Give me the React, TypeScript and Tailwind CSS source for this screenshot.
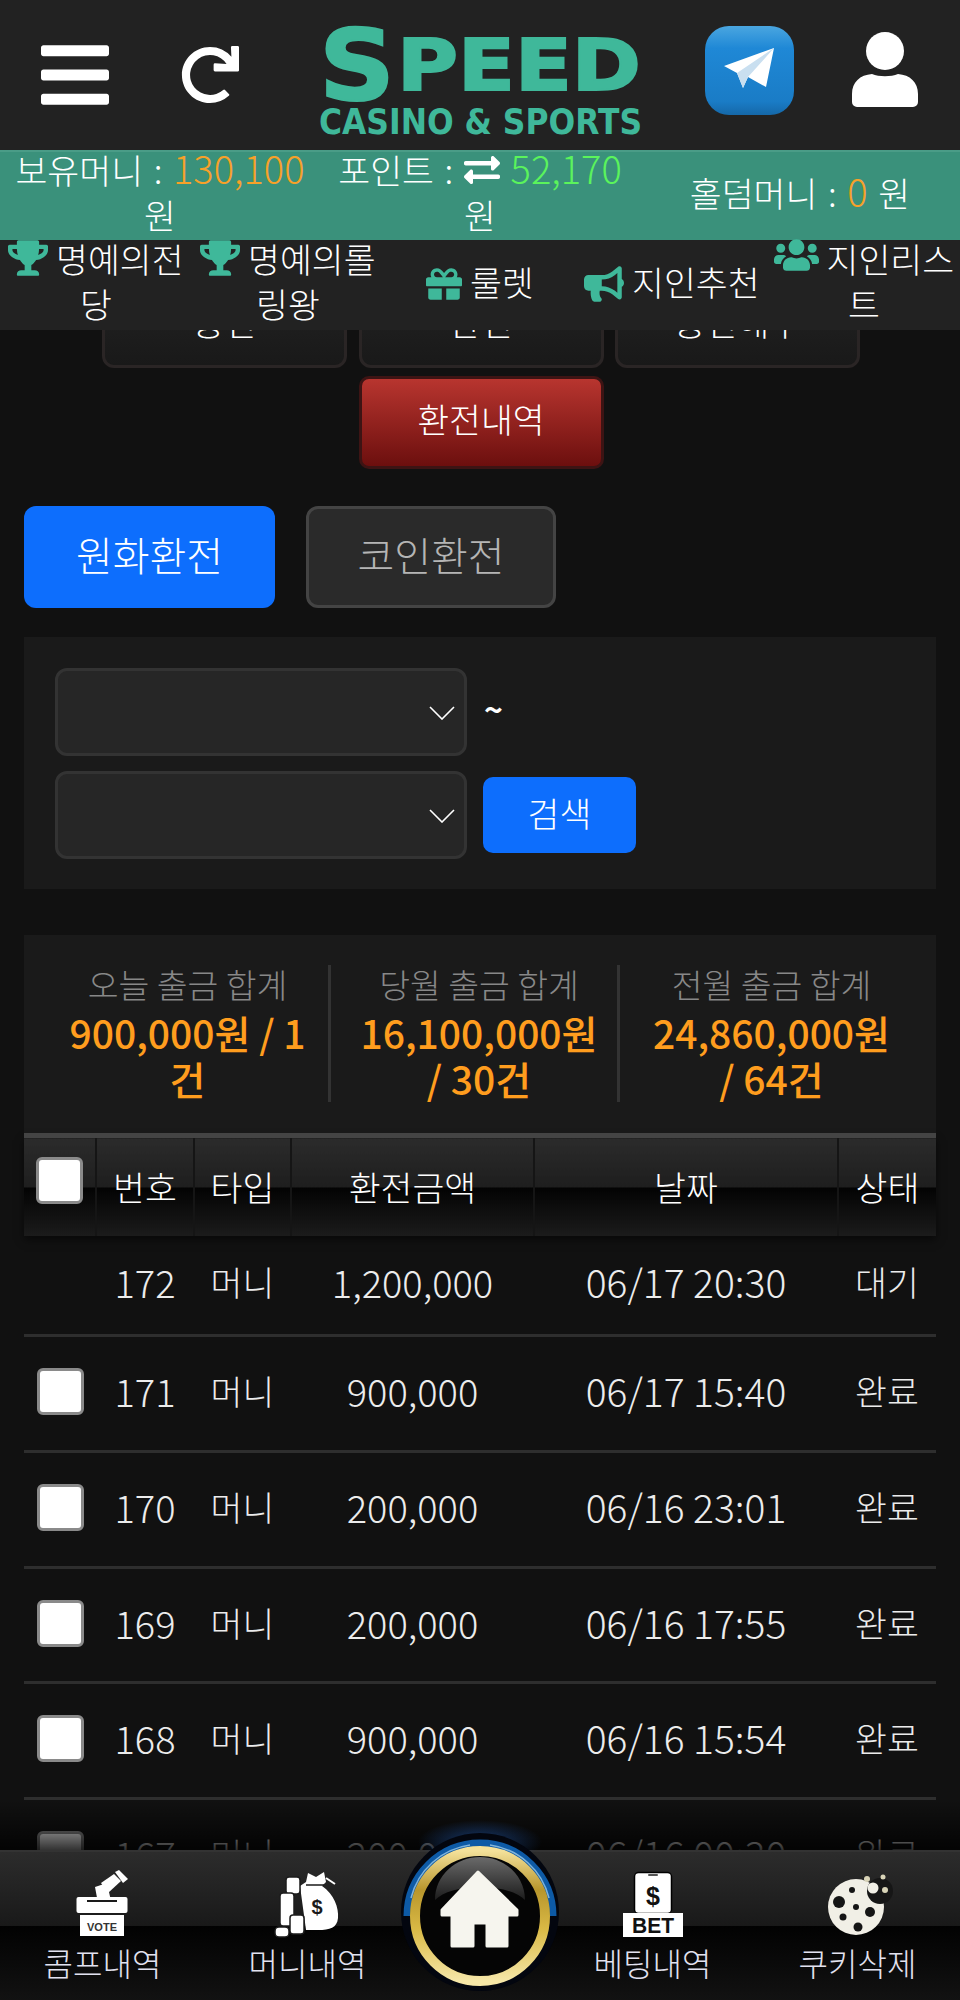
import { FaBars, FaBullhorn, FaExchangeAlt, FaGift, FaRedo, FaTrophy, FaUsers } from "react-icons/fa";

const rows = [
  { no: "172", amount: "1,200,000", date: "06/17 20:30", state: "대기", check: false, height: "h-[100px]" },
  { no: "171", amount: "900,000", date: "06/17 15:40", state: "완료", check: true, height: "h-[116px]" },
  { no: "170", amount: "200,000", date: "06/16 23:01", state: "완료", check: true, height: "h-[116px]" },
  { no: "169", amount: "200,000", date: "06/16 17:55", state: "완료", check: true, height: "h-[115px]" },
  { no: "168", amount: "900,000", date: "06/16 15:54", state: "완료", check: true, height: "h-[116px]" },
  { no: "167", amount: "200,000", date: "06/16 00:30", state: "완료", check: true, height: "h-[116px]" },
];

const totals = [
  { label: "오늘 출금 합계", value: "900,000원 / 1건" },
  { label: "당월 출금 합계", value: "16,100,000원 / 30건" },
  { label: "전월 출금 합계", value: "24,860,000원 / 64건" },
];

function Logo() {
  return (
    <svg width="324" height="110" viewBox="0 0 324 110" className="block overflow-visible">
      <g fill="#3fb89a" stroke="#3fb89a" fontWeight="700" fontFamily="'DejaVu Sans', sans-serif">
        <text x="0" y="73" fontSize="98" textLength="76" lengthAdjust="spacingAndGlyphs" strokeWidth="2">S</text>
        <text x="78" y="63" fontSize="72" textLength="244" lengthAdjust="spacingAndGlyphs" strokeWidth="2">PEED</text>
        <text x="0" y="107" fontSize="35" textLength="323" lengthAdjust="spacingAndGlyphs" strokeWidth="0">CASINO &amp; SPORTS</text>
      </g>
    </svg>
  );
}

function Telegram() {
  return (
    <div className="flex h-[89px] w-[89px] items-center justify-center rounded-[24px] bg-[linear-gradient(180deg,#4aa6e0_0%,#1f88d6_25%,#1a7cc6_85%,#1568a8_100%)]">
      <svg width="52" height="44" viewBox="0 0 52 44">
        <path d="M0 18 50 0 42 39 24 29 19 40 13 25Z" fill="#fff" />
        <path d="M13 25 50 0 24 29 19 40Z" fill="#c9dff0" />
      </svg>
    </div>
  );
}

function UserGlyph() {
  return (
    <svg width="66" height="75" viewBox="0 0 66 75" className="block">
      <circle cx="33" cy="19" r="19" fill="#fff" />
      <path d="M20 42c7 3 19 3 26 0 12 1 20 8 20 20v8a5 5 0 0 1-5 5H5a5 5 0 0 1-5-5v-8c0-12 8-19 20-20Z" fill="#fff" />
    </svg>
  );
}

function VoteIcon() {
  return (
    <svg width="60" height="70" viewBox="0 0 60 70">
      <path d="M22 17 34 13 38 31 25 33Z" fill="#fff" />
      <path d="M28 13 41 4 48 11 35 23Z" fill="#fff" />
      <path d="M42 2 46 0 55 9 50 13Z" fill="#fff" />
      <rect x="3.5" y="27" width="51" height="16" rx="2" fill="#fff" />
      <rect x="14" y="30" width="30" height="2" fill="#1a1a1a" />
      <rect x="7" y="45" width="44" height="21" fill="#fff" />
      <text x="29" y="61" textAnchor="middle" fontSize="11" fontWeight="700" fontFamily="'Liberation Sans', sans-serif" fill="#333">VOTE</text>
    </svg>
  );
}

function MoneyIcon() {
  return (
    <svg width="80" height="70" viewBox="0 0 80 70">
      <path d="M40 3 48 7 56 2 58 12 54 16C66 24 71 38 70 48 69 58 62 60 50 60H38L32 16 38 12Z" fill="#fff" />
      <path d="M38 15H56" stroke="#1a1a1a" strokeWidth="1.5" />
      <path d="M58 8 67 14" stroke="#fff" strokeWidth="2" />
      <text x="49" y="44" textAnchor="middle" fontSize="20" fontWeight="700" fontFamily="'Liberation Sans', sans-serif" fill="#1a1a1a">$</text>
      <rect x="18" y="7" width="14" height="17" rx="3" fill="#fff" stroke="#1c1c1c" strokeWidth="1.5" />
      <rect x="12" y="23" width="14" height="33" rx="3" fill="#fff" stroke="#1c1c1c" strokeWidth="1.5" />
      <rect x="22" y="45" width="14" height="19" rx="3" fill="#fff" stroke="#1c1c1c" strokeWidth="1.5" />
      <rect x="7" y="57" width="14" height="10" rx="4" fill="#fff" stroke="#1c1c1c" strokeWidth="1.5" />
    </svg>
  );
}

function BetIcon() {
  return (
    <svg width="70" height="70" viewBox="0 0 70 70">
      <rect x="16.5" y="2.5" width="37" height="41" rx="4" fill="#fff" stroke="#000" strokeWidth="1.5" />
      <rect x="30" y="4" width="10" height="2" rx="1" fill="#555" />
      <text x="35" y="35" textAnchor="middle" fontSize="25" fontWeight="700" fontFamily="'Liberation Sans', sans-serif" fill="#111">$</text>
      <rect x="5" y="43" width="60" height="24" fill="#fff" />
      <text x="35" y="63" textAnchor="middle" fontSize="22" fontWeight="700" textLength="42" lengthAdjust="spacingAndGlyphs" fontFamily="'Liberation Sans', sans-serif" fill="#111">BET</text>
    </svg>
  );
}

function CookieIcon() {
  return (
    <svg width="75" height="70" viewBox="0 0 75 70">
      <circle cx="36" cy="37" r="28" fill="#f1efe6" />
      <circle cx="60" cy="21" r="13" fill="#161616" />
      <circle cx="53" cy="18" r="5.5" fill="#f1efe6" />
      <circle cx="47" cy="9" r="3" fill="#d9d4b8" />
      <circle cx="63" cy="7" r="2.5" fill="#d9d4b8" />
      <circle cx="65" cy="20" r="3" fill="#d9d4b8" />
      <circle cx="19" cy="32" r="6" fill="#151515" />
      <circle cx="32" cy="20" r="3" fill="#151515" />
      <circle cx="36" cy="37" r="3" fill="#151515" />
      <circle cx="50" cy="42" r="5" fill="#151515" />
      <circle cx="23" cy="47" r="3.5" fill="#151515" />
      <circle cx="38" cy="57" r="4.5" fill="#151515" />
    </svg>
  );
}

function HomeButton() {
  return (
    <svg width="180" height="180" viewBox="0 0 180 180" className="block">
      <defs>
        <linearGradient id="goldRing" x1="0" y1="0" x2="0" y2="1">
          <stop offset="0" stopColor="#f4e19a" />
          <stop offset="0.3" stopColor="#b8962c" />
          <stop offset="0.6" stopColor="#d9b945" />
          <stop offset="1" stopColor="#f6e7a8" />
        </linearGradient>
        <linearGradient id="gloss" x1="0" y1="0" x2="0" y2="1">
          <stop offset="0" stopColor="#6a6a6a" />
          <stop offset="1" stopColor="#1c1c1c" />
        </linearGradient>
        <radialGradient id="halo" cx="0.5" cy="0.5" r="0.5">
          <stop offset="0" stopColor="#1d4f9c" stopOpacity="0.7" />
          <stop offset="1" stopColor="#1d4f9c" stopOpacity="0" />
        </radialGradient>
      </defs>
      <ellipse cx="90" cy="22" rx="62" ry="22" fill="url(#halo)" />
      <circle cx="90" cy="92" r="79" fill="#03060f" />
      <path d="M17 96A73 73 0 0 1 163 96" fill="none" stroke="#0d5aa6" strokeWidth="7" />
      <path d="M21 78A71 71 0 0 1 80 25M100 25A71 71 0 0 1 159 78" fill="none" stroke="#7fb4dc" strokeWidth="1.5" />
      <circle cx="90" cy="96" r="65" fill="#050505" stroke="url(#goldRing)" strokeWidth="10" />
      <path d="M45 80C45 55 66 37 90 37s45 18 45 43c-8-8-25-13-45-13s-37 5-45 13Z" fill="url(#gloss)" />
      <path
        d="M88 52 127 90 127 95 117 95 117 126 97 126 97 103 83 103 83 126 62 126 62 95 52 95 52 90Z"
        fill="#f6f5ee"
        stroke="#f6f5ee"
        strokeWidth="3"
        strokeLinejoin="round"
      />
    </svg>
  );
}

function BottomItem({ icon, label }: { icon: React.ReactNode; label: string }) {
  return (
    <div className="flex flex-col items-center">
      <div className="flex h-[70px] items-center justify-center">{icon}</div>
      <span className="text-[32px] leading-[44px] text-[#e2e2f0]">{label}</span>
    </div>
  );
}

function DateSelect() {
  return (
    <div className="relative h-[88px] w-[412px] shrink-0">
      <select className="h-full w-full appearance-none rounded-[12px] border-[3px] border-[#333] bg-[#262626]" />
      <svg width="26" height="14" viewBox="0 0 26 14" className="absolute right-[12px] top-[38px]">
        <path d="M1 1 13 13 25 1" fill="none" stroke="#fff" strokeWidth="1.6" />
      </svg>
    </div>
  );
}

function RowCheck() {
  return <input type="checkbox" className="block h-[47px] w-[47px] appearance-none rounded-[6px] border-[3px] border-[#8a8a8a] bg-white" />;
}

export default function App() {
  return (
    <div className="relative h-[2000px] w-[960px] overflow-hidden bg-[#111] font-['Noto_Sans_CJK_KR','Liberation_Sans',sans-serif] text-[34.67px] font-light leading-[45px] text-white">
      <header className="relative z-10">
        <div className="flex h-[150px] items-center bg-[#222] pl-[41px]">
          <FaBars className="h-[78px] w-[68px]" />
          <FaRedo className="ml-[72px] h-[58px] w-[58px]" />
          <div className="ml-[80px] mt-[14px]">
            <Logo />
          </div>
          <div className="ml-[62px] -mt-[10px]">
            <Telegram />
          </div>
          <div className="ml-[58px] -mt-[12px]">
            <UserGlyph />
          </div>
        </div>

        <div className="grid h-[90px] grid-cols-3 grid-rows-[80px] items-center border-t-2 border-[#4a9c87] bg-[#3a917b] text-center [word-spacing:3px]">
          <div className="px-[12px]">
            보유머니 : <span className="text-[38px] leading-none text-[#f7a129]">130,100</span> 원
          </div>
          <div className="px-[12px]">
            포인트 : <FaExchangeAlt className="inline h-[36px] w-[36px] align-[-4px]" />{" "}
            <span className="text-[38px] leading-none text-[#5bf45b]">52,170</span> 원
          </div>
          <div>
            홀덤머니 : <span className="text-[38px] leading-none text-[#f7a129]">0</span> 원
          </div>
        </div>

        <nav className="grid h-[90px] grid-cols-5 grid-rows-[82px] items-center bg-[#222] text-center">
          <div>
            <FaTrophy className="inline h-[36px] w-[40px] align-[-3px] text-[#3fb89a]" /> 명예의전당
          </div>
          <div>
            <FaTrophy className="inline h-[36px] w-[40px] align-[-3px] text-[#3fb89a]" /> 명예의롤링왕
          </div>
          <div>
            <FaGift className="inline h-[36px] w-[36px] align-[-6px] text-[#3fb89a]" /> 룰렛
          </div>
          <div>
            <FaBullhorn className="inline h-[36px] w-[40px] align-[-6px] text-[#3fb89a]" /> 지인추천
          </div>
          <div>
            <FaUsers className="inline h-[36px] w-[45px] align-[0px] text-[#3fb89a]" /> 지인리스트
          </div>
        </nav>
      </header>

      <main className="-mt-[55px] px-6">
        <div className="ml-[78px] flex w-[758px] flex-wrap justify-center gap-x-[11.5px] gap-y-[8px]">
          {["충전", "환전", "충전해주"].map((t) => (
            <button
              key={t}
              className="h-[93px] w-[245px] rounded-[12px] border-[3px] border-[#2a2525] bg-[linear-gradient(180deg,#242424,#191919)] text-white"
            >
              {t}
            </button>
          ))}
          <button className="h-[93px] w-[245px] rounded-[10px] border-[3px] border-[#3d1414] bg-[linear-gradient(180deg,#b8352f,#6c0f0e)] pb-[8px] text-white">
            환전내역
          </button>
        </div>

        <div className="mt-[37px] flex gap-[31px] text-[40px]">
          <button className="h-[102px] w-[251px] rounded-[12px] bg-[#0d6efd] pb-[6px] text-white">원화환전</button>
          <button className="h-[102px] w-[250px] rounded-[12px] border-[3px] border-[#444] bg-[#2a2a2a] pb-[6px] text-[#b5b5b5]">코인환전</button>
        </div>

        <section className="mt-[29px] flex h-[252px] flex-col gap-[15px] bg-[#1a1a1a] px-[31px] pt-[31px]">
          <div className="flex items-center gap-[17px]">
            <DateSelect />
            <span className="-mt-[8px] text-[32px] font-bold">~</span>
          </div>
          <div className="flex items-center gap-[16px]">
            <DateSelect />
            <button className="h-[76px] w-[153px] rounded-[10px] bg-[#0d6efd] pb-[6px] text-white">검색</button>
          </div>
        </section>

        <section className="mt-[46px] grid h-[198px] grid-cols-[281px_289px_1fr] bg-[#1a1a1a] px-[23px] pt-[30px] text-center">
          {totals.map((t, i) => (
            <div key={t.label} className={`h-[137px] ${i > 0 ? "border-l-[3px] border-[#333] pl-[26px] pr-[16px]" : "px-[20px]"}`}>
              <div className="text-[33.5px] leading-[38px] text-[#888]">{t.label}</div>
              <div className="mt-[6px] text-[39px] font-medium leading-[46px] text-[#ff9d1e]">{t.value}</div>
            </div>
          ))}
        </section>

        <table className="w-[912px] table-fixed border-collapse text-center">
          <colgroup>
            <col className="w-[72px]" />
            <col className="w-[98px]" />
            <col className="w-[97px]" />
            <col className="w-[243px]" />
            <col className="w-[304px]" />
            <col className="w-[98px]" />
          </colgroup>
          <thead>
            <tr className="h-[100px] border-t-[5px] border-[#444] shadow-[0_4px_8px_rgba(0,0,0,.5)]">
              <th className="border-r-[2px] border-[#151515] bg-[linear-gradient(180deg,#2b2b2b_0%,#1e1e1e_50%,#030303_50%,#1b1b1b_100%)]">
                <div className="flex justify-center pb-[13px]">
                  <RowCheck />
                </div>
              </th>
              {["번호", "타입", "환전금액", "날짜", "상태"].map((h) => (
                <th
                  key={h}
                  className="border-r-[2px] border-[#151515] bg-[linear-gradient(180deg,#2b2b2b_0%,#1e1e1e_50%,#030303_50%,#1b1b1b_100%)] font-light last:border-r-0"
                >
                  {h}
                </th>
              ))}
            </tr>
          </thead>
          <tbody>
            {rows.map((r) => (
              <tr key={r.no} className={`border-b-[3px] border-[#2e2e2e] text-[#ececec] ${r.height}`}>
                <td>
                  {r.check && (
                    <div className="flex justify-center pb-[4px]">
                      <RowCheck />
                    </div>
                  )}
                </td>
                <td className="pb-[6px] text-[38px]">{r.no}</td>
                <td className="pb-[6px]">머니</td>
                <td className="pb-[6px] text-[38px]">{r.amount}</td>
                <td className="pb-[6px] text-[39px]">{r.date}</td>
                <td className="pb-[6px]">{r.state}</td>
              </tr>
            ))}
          </tbody>
        </table>
      </main>

      <footer className="absolute bottom-0 left-0 h-[150px] w-full border-t-2 border-[#333] bg-[linear-gradient(180deg,#2c2c2c_0%,#191919_50%,#020202_50%,#121212_100%)] pt-[18px]">
        <div className="absolute -top-[52px] left-0 h-[50px] w-full bg-[linear-gradient(180deg,rgba(0,0,0,0),rgba(0,0,0,.8))]" />
        <div className="grid grid-cols-[205px_205px_1fr_205px_205px]">
          <BottomItem icon={<VoteIcon />} label="콤프내역" />
          <BottomItem icon={<MoneyIcon />} label="머니내역" />
          <div />
          <BottomItem icon={<BetIcon />} label="베팅내역" />
          <BottomItem icon={<CookieIcon />} label="쿠키삭제" />
        </div>
        <div className="absolute -top-[32px] left-[390px]">
          <HomeButton />
        </div>
      </footer>
    </div>
  );
}
